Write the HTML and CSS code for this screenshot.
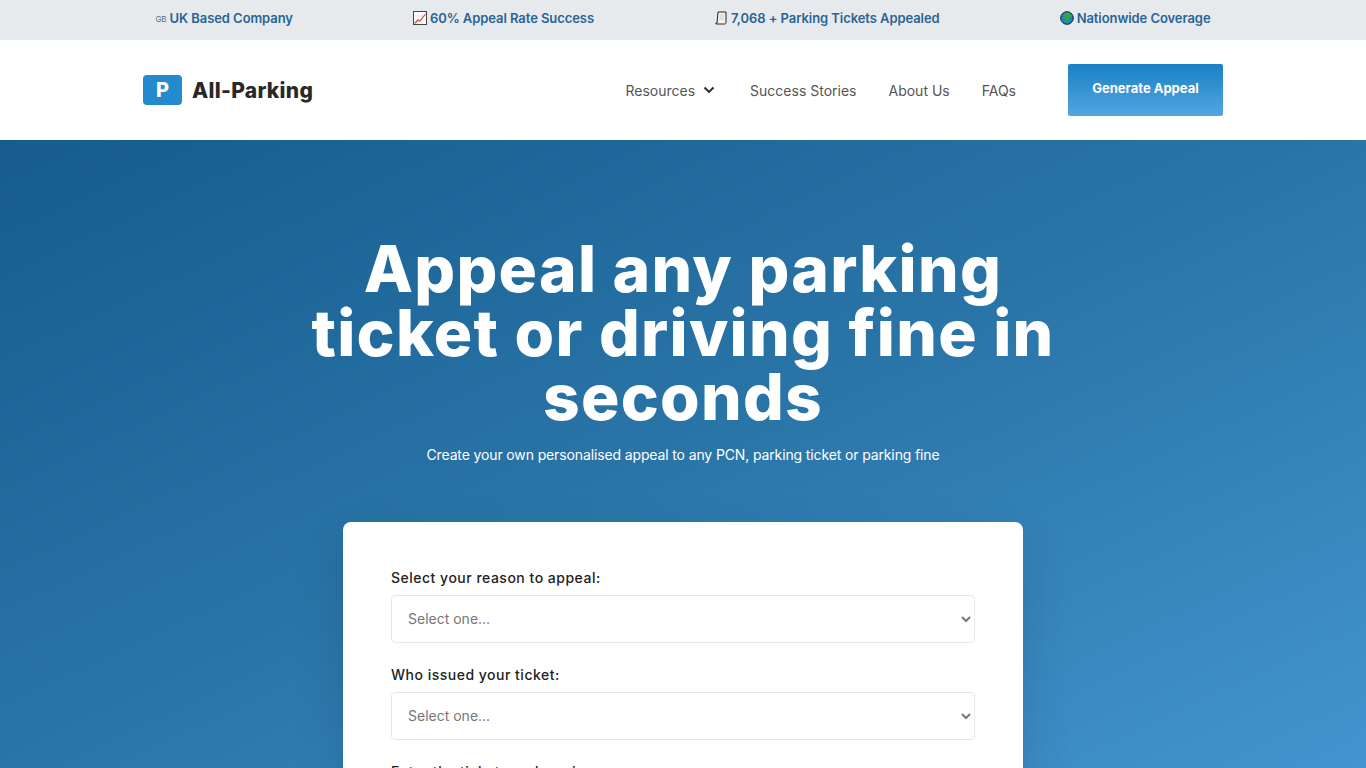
FILE: index.html
```html
<!DOCTYPE html>
<html lang="en">
<head>
    <meta charset="UTF-8">
    <meta name="viewport" content="width=device-width, initial-scale=1.0">
    <title>All-Parking - Appeal any parking ticket</title>
    <link rel="stylesheet" href="styles.css">
</head>
<body>

    <!-- Top Bar -->
    <div class="topbar">
        <div class="topbar-item"><span class="flag">GB</span> UK Based Company</div>
        <div class="topbar-item">
            <svg class="emoji" viewBox="0 0 14 14"><rect x="0.5" y="0.5" width="13" height="13" fill="#fff" stroke="#444"/><path d="M1 5h12M1 9h12M5 1v12M9 1v12" stroke="#ddd" stroke-width="0.6"/><path d="M1.500 12.500L5 9l2 1 5.500-7" fill="none" stroke="#e0392b" stroke-width="1.100"/></svg>
            60% Appeal Rate Success
        </div>
        <div class="topbar-item">
            <svg class="emoji" viewBox="0 0 12 14"><path d="M3 1h8v10.500c0 1-.6 1.500-1.500 1.500H1.500C.6 13 .5 12 1 12h1z" fill="#f2f2ee" stroke="#222" stroke-width="1"/><path d="M4.500 4h4.500M4.500 6h4.500M4.500 8h4.500" stroke="#bbb" stroke-width="0.7"/></svg>
            7,068 + Parking Tickets Appealed
        </div>
        <div class="topbar-item">
            <svg class="emoji" viewBox="0 0 14 14"><circle cx="7" cy="7" r="6.300" fill="#1f7fdc" stroke="#1a1a1a" stroke-width="1"/><path d="M4.500 2.500l4-1 3 2.500-1 3-2 1 .5 3-2 1.500-1-4-3-1.500z" fill="#2fa544"/></svg>
            Nationwide Coverage
        </div>
    </div>

    <!-- Header -->
    <header class="header">
        <a href="#" class="logo">
            <span class="logo-mark">P</span>
            <span class="logo-text">All-Parking</span>
        </a>
        <nav class="nav">
            <a href="#" class="nav-drop">Resources
                <svg class="chevron" viewBox="0 0 12 8"><path d="M1.500 1.500L6 6l4.500-4.500" fill="none" stroke="#1d2433" stroke-width="1.800"/></svg>
            </a>
            <a href="#">Success Stories</a>
            <a href="#">About Us</a>
            <a href="#">FAQs</a>
        </nav>
        <a href="#" class="cta-btn">Generate Appeal</a>
    </header>

    <!-- Hero Section -->
    <section class="hero">
        <h1>Appeal any parking ticket or driving fine in seconds</h1>
        <p>Create your own personalised appeal to any PCN, parking ticket or parking fine</p>

        <form class="appeal-card">
            <label for="reason">Select your reason to appeal:</label>
            <select id="reason"><option>Select one...</option></select>
            <label for="issuer">Who issued your ticket:</label>
            <select id="issuer"><option>Select one...</option></select>
            <label for="ticket">Enter the ticket number given:</label>
        </form>
    </section>

</body>
</html>
```

FILE: styles.css
```css
/* Reset styles */
* {
    margin: 0;
    padding: 0;
    box-sizing: border-box;
}

html, body {
    height: 768px;
    overflow: hidden;
}

body {
    background: white;
    font-family: 'Inter', sans-serif;
    color: #222;
}

a {
    text-decoration: none;
}

/* Top Bar */
.topbar {
    height: 40px;
    padding-bottom: 4px;
    background: #e7eaed;
    display: flex;
    justify-content: center;
    align-items: center;
    gap: 120px;
}

.topbar-item {
    display: flex;
    align-items: center;
    gap: 3px;
    font-size: 13px;
    font-weight: 600;
    letter-spacing: -0.07px;
    color: #2a6496;
    white-space: nowrap;
}

.flag {
    font-size: 8px;
    font-weight: 400;
    color: #4d6f8f;
    margin-top: 2px;
}

.emoji {
    width: 14px;
    height: 14px;
}

/* Header */
.header {
    height: 100px;
    padding: 0 143px;
    display: flex;
    align-items: center;
}

.logo {
    display: flex;
    align-items: center;
    gap: 10px;
}

.logo-mark {
    width: 39px;
    height: 30px;
    background: #228acd;
    border-radius: 4px;
    color: white;
    font-size: 20px;
    font-weight: 800;
    display: flex;
    align-items: center;
    justify-content: center;
}

.logo-text {
    font-size: 21px;
    font-weight: 800;
    letter-spacing: 0.3px;
    color: #282828;
}

.nav {
    margin-left: auto;
    display: flex;
    align-items: center;
    gap: 32px;
}

.nav a {
    font-size: 14px;
    color: #555;
}

.nav-drop {
    display: flex;
    align-items: center;
    gap: 8px;
    margin-right: 3px;
}

.chevron {
    width: 12px;
    height: 8px;
}

.cta-btn {
    margin-left: 52px;
    width: 155px;
    height: 52px;
    padding-bottom: 5px;
    display: flex;
    align-items: center;
    justify-content: center;
    background: linear-gradient(180deg, #1a80c4, #52a7e0);
    border-radius: 2px;
    color: white;
    font-size: 13px;
    font-weight: 700;
}

/* Hero Section */
.hero {
    height: 628px;
    padding-top: 97px;
    background: linear-gradient(155deg, #165c8e 0%, #2a75a8 50%, #4394cf 100%);
    display: flex;
    flex-direction: column;
    align-items: center;
    text-align: center;
    color: white;
}

.hero h1 {
    width: 780px;
    font-size: 64px;
    line-height: 64px;
    font-weight: 800;
    letter-spacing: 1.3px;
}

.hero p {
    margin-top: 14px;
    font-size: 14px;
    line-height: 24px;
    letter-spacing: -0.13px;
}

/* Appeal Form */
.appeal-card {
    width: 680px;
    height: 400px;
    margin-top: 55px;
    padding: 46px 48px;
    flex-shrink: 0;
    background: white;
    border-radius: 8px;
    box-shadow: 0 20px 50px rgba(0, 0, 0, 0.12);
    color: #222;
    text-align: left;
}

.appeal-card label {
    display: block;
    font-size: 14px;
    line-height: 20px;
    font-weight: 500;
    letter-spacing: 0.5px;
    margin-bottom: 7px;
}

.appeal-card select {
    display: block;
    width: 100%;
    height: 48px;
    margin-bottom: 22px;
    padding: 0 11px 2px 12px;
    background: white;
    border: 1px solid #e8e8e8;
    border-radius: 4px;
    font-family: 'Inter', sans-serif;
    font-size: 14px;
    color: #777;
}
```
